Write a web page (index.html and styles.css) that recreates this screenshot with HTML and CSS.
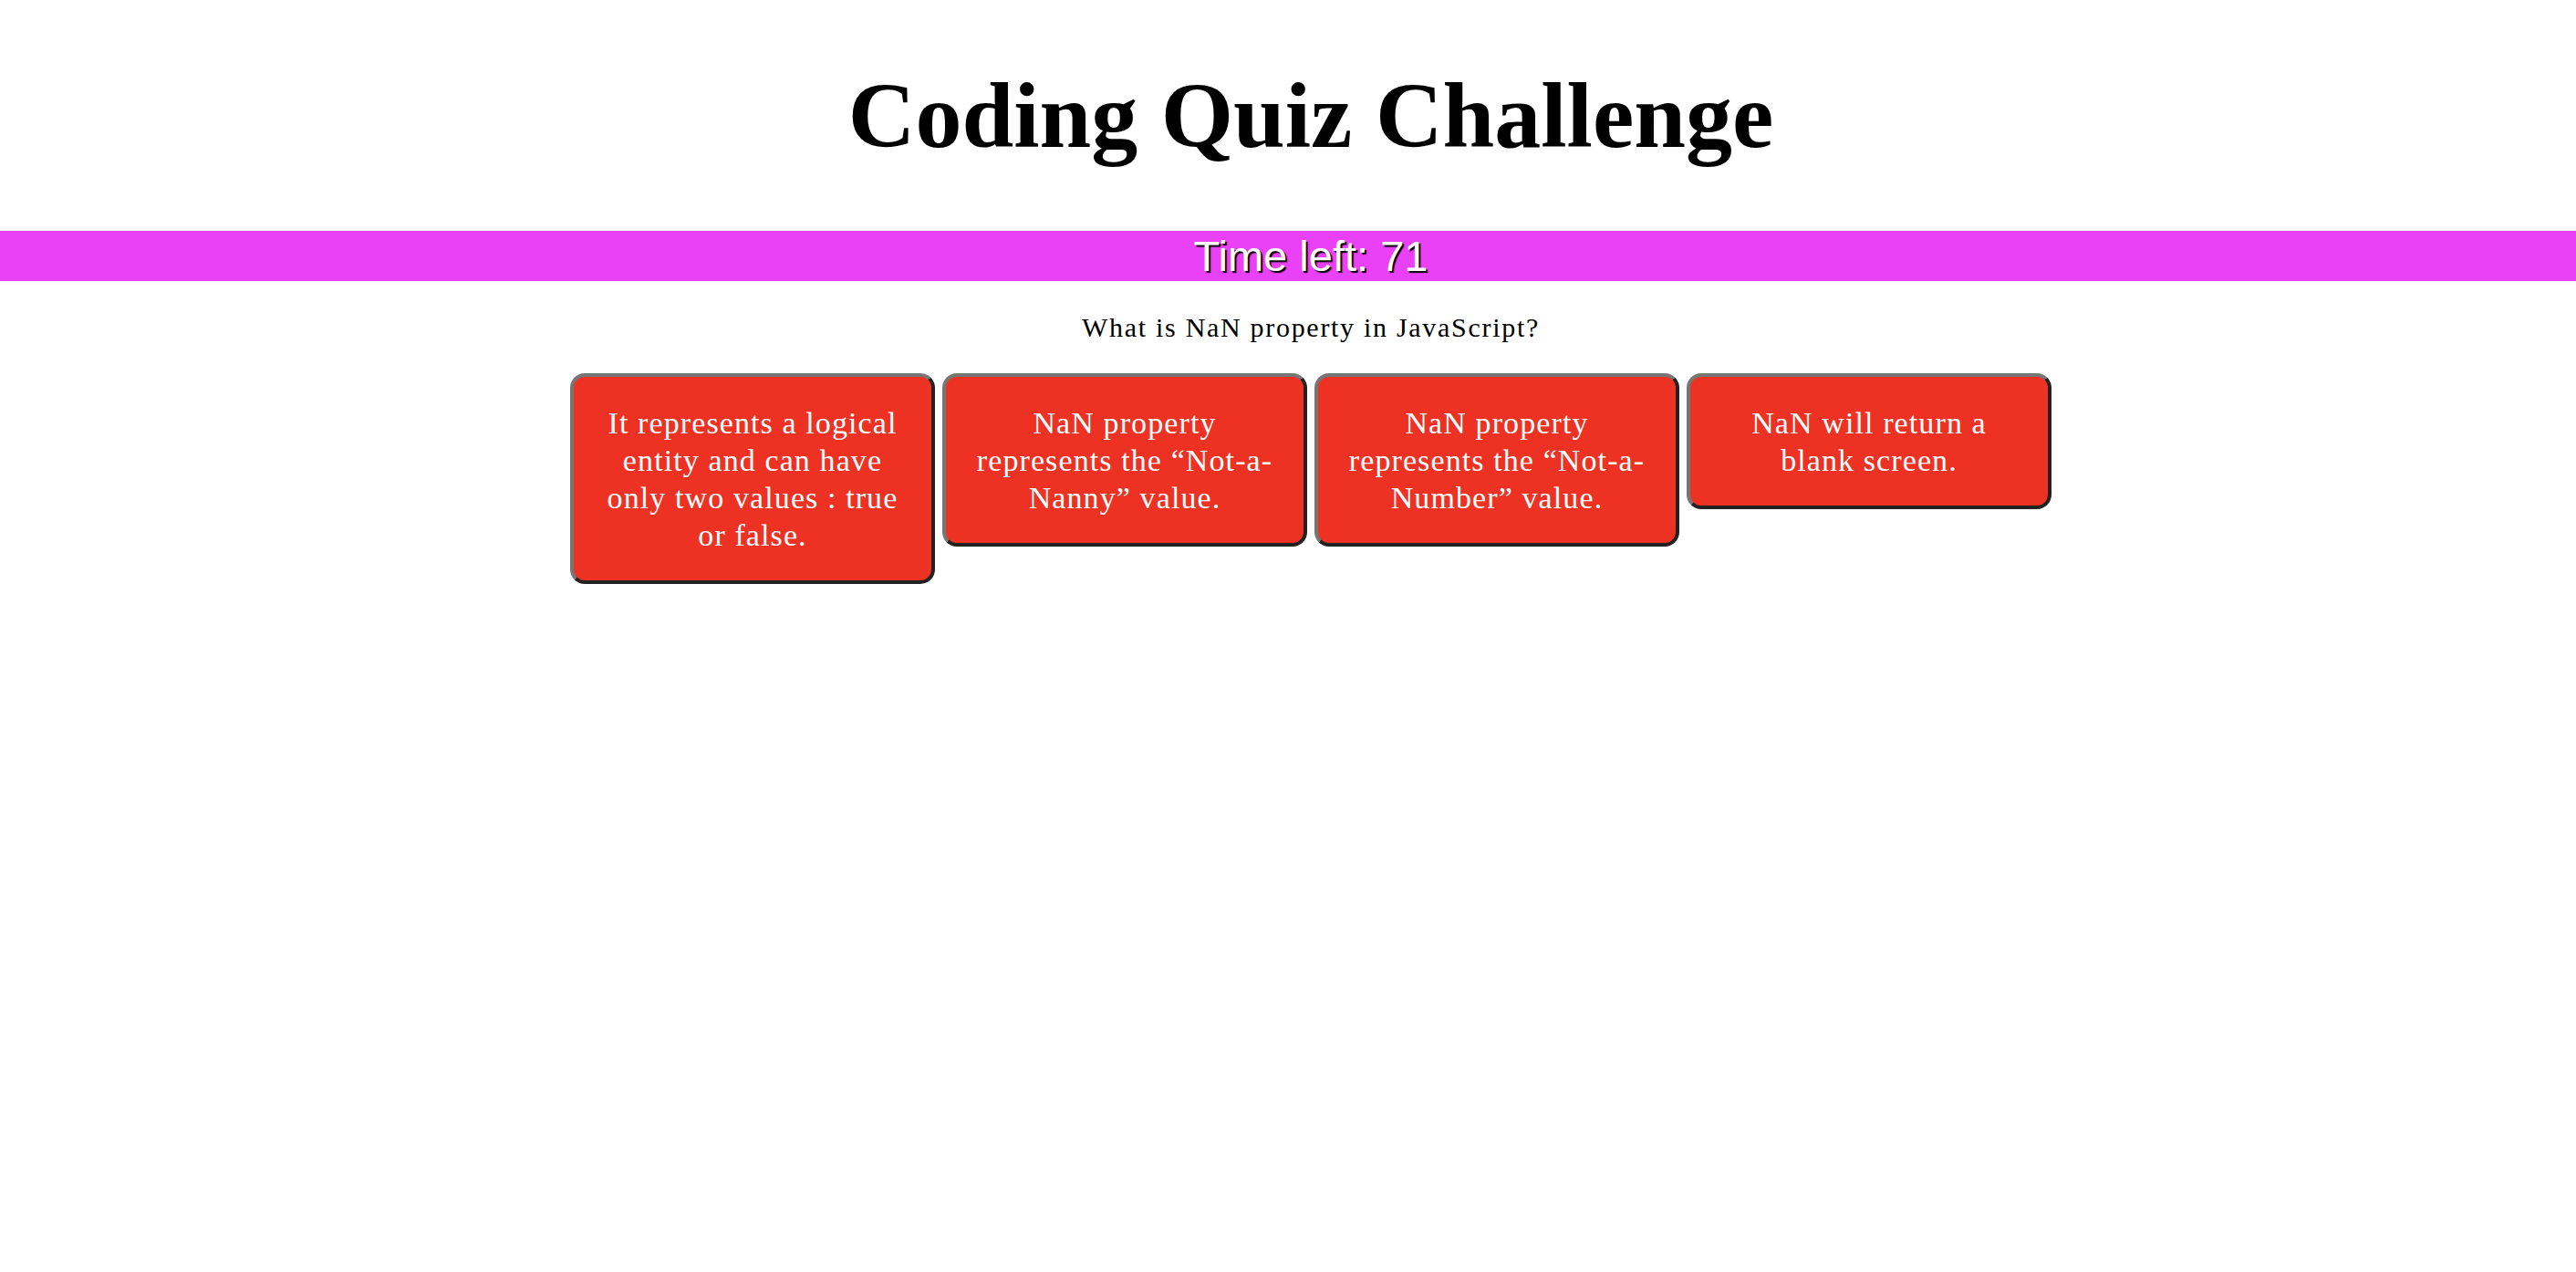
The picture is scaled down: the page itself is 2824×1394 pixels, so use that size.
FILE: index.html
```html
<!DOCTYPE html>
<html lang="en">
<head>
<meta charset="utf-8">
<title>Coding Quiz Challenge</title>
<link rel="stylesheet" href="styles.css">
</head>
<body>
  <header class="header">
    <h1 class="title">Coding Quiz Challenge</h1>
  </header>
  <div class="timer-bar">
    <span class="timer-text">Time left: 71</span>
  </div>
  <main class="quiz">
    <p class="question">What is NaN property in JavaScript?</p>
    <div class="answers">
      <button class="answer">It represents a logical entity and can have only two values : true or false.</button>
      <button class="answer">NaN property represents the “Not-a-Nanny” value.</button>
      <button class="answer">NaN property represents the “Not-a-Number” value.</button>
      <button class="answer">NaN will return a blank screen.</button>
    </div>
  </main>
</body>
</html>
```
FILE: styles.css
```css
html, body {
  margin: 0;
  padding: 0;
  background: #ffffff;
  overflow-x: hidden;
}

body {
  font-family: "Liberation Serif", "Times New Roman", serif;
  color: #000;
}

.header {
  padding: 76px 0 0 50px;
  margin-bottom: 75px;
}

.title {
  margin: 0;
  font-family: "Liberation Serif", serif;
  font-weight: bold;
  font-size: 102px;
  line-height: 102px;
  text-align: center;
}

.timer-bar {
  background: #ea41f6;
  height: 55px;
  line-height: 55px;
  padding-left: 50px;
  text-align: center;
}

.timer-text {
  font-family: "Liberation Sans", Arial, sans-serif;
  font-size: 47px;
  color: #ffffff;
  text-shadow: 2px 2px 1px #000;
}

.quiz {
  padding-left: 50px;
  display: flex;
  flex-direction: column;
  align-items: center;
}

.question {
  margin: 33px 0 0 0;
  font-size: 30px;
  line-height: 36px;
  letter-spacing: 1.7px;
  text-align: center;
}

.answers {
  margin-top: 32px;
  display: flex;
  align-items: flex-start;
  gap: 8px;
}

.answer {
  box-sizing: border-box;
  width: 400px;
  margin: 0;
  padding: 30px 25px 29px;
  background: #ed3224;
  color: #ffffff;
  font-family: "Liberation Serif", "Times New Roman", serif;
  font-size: 34px;
  line-height: 41px;
  letter-spacing: 1.1px;
  text-align: center;
  border: 4px solid;
  border-color: #767676 #222222 #222222 #767676;
  border-radius: 16px;
  cursor: pointer;
}
```
